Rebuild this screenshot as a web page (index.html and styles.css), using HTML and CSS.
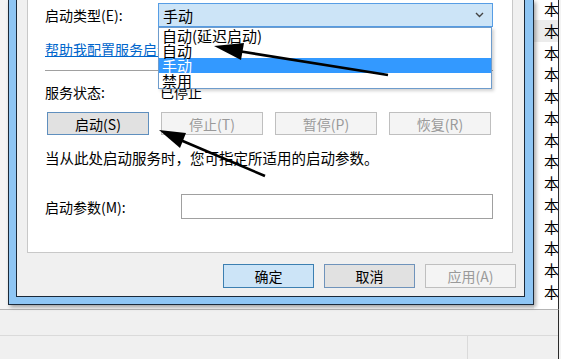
FILE: index.html
```html
<!DOCTYPE html>
<html lang="zh-CN">
<head>
<meta charset="utf-8">
<title>服务属性</title>
<link rel="stylesheet" href="styles.css">
</head>
<body>
<div class="screen">
  <div class="main">
    <div class="gutter"></div>
    <div class="dialog">
      <div class="dialog-inner">
        <div class="panel">
          <div class="row row-type">
            <span class="label">启动类型(E):</span>
            <div class="combo">
              <span>手动</span>
              <svg class="chev" width="9" height="6" viewBox="0 0 9 6"><path d="M1 1 L4.5 4.5 L8 1" fill="none" stroke="#444" stroke-width="1.4"/></svg>
            </div>
          </div>
          <div class="row-link"><a class="link">帮助我配置服务启动选项。</a></div>
          <div class="sep"></div>
          <div class="row row-status">
            <span class="label">服务状态:</span>
            <span class="value">已停止</span>
          </div>
          <div class="svc-buttons">
            <button class="btn btn-focus">启动(S)</button>
            <button class="btn btn-disabled">停止(T)</button>
            <button class="btn btn-disabled">暂停(P)</button>
            <button class="btn btn-disabled">恢复(R)</button>
          </div>
          <p class="desc">当从此处启动服务时，您可指定所适用的启动参数。</p>
          <div class="row row-param">
            <span class="label label-param">启动参数(M):</span>
            <div class="input"></div>
          </div>
        </div>
        <div class="dlg-buttons">
          <button class="btn btn-default">确定</button>
          <button class="btn btn-cancel">取消</button>
          <button class="btn btn-disabled">应用(A)</button>
        </div>
        <ul class="dropdown">
          <li>自动(延迟启动)</li>
          <li>自动</li>
          <li class="sel">手动</li>
          <li>禁用</li>
        </ul>
      </div>
    </div>
    <div class="list">
      <div class="li">本</div>
      <div class="li hl">本</div>
      <div class="li">本</div>
      <div class="li">本</div>
      <div class="li">本</div>
      <div class="li">本</div>
      <div class="li">本</div>
      <div class="li">本</div>
      <div class="li">本</div>
      <div class="li">本</div>
      <div class="li">本</div>
      <div class="li">本</div>
      <div class="li">本</div>
      <div class="li">本</div>
    </div>
  </div>
  <div class="status">
    <div class="status-top"></div>
    <div class="status-bottom">
      <div class="cell cell-main"></div>
      <div class="cell cell-side"></div>
    </div>
  </div>
  <svg class="arrows" width="561" height="359" viewBox="0 0 561 359">
    <line x1="388" y1="75" x2="238" y2="51" stroke="#000" stroke-width="2.6"/>
    <polygon points="214,46 244,43 241,60" fill="#000"/>
    <line x1="265" y1="176" x2="178" y2="139" stroke="#000" stroke-width="2.6"/>
    <polygon points="159,130 186,133 180,148" fill="#000"/>
  </svg>
</div>
</body>
</html>
```

FILE: styles.css
```css
* { box-sizing: border-box; }
html, body { margin: 0; padding: 0; }
body {
  width: 561px;
  height: 359px;
  overflow: hidden;
  background: #f3f3f3;
  font-family: "Noto Sans CJK SC", "Microsoft YaHei", sans-serif;
  font-size: 14px;
  color: #000;
}
.screen {
  position: relative;
  width: 561px;
  height: 359px;
  display: flex;
  flex-direction: column;
}
.main {
  display: flex;
  height: 309px;
  flex: none;
}
.gutter {
  width: 8px;
  flex: none;
  background: #f4f4f4;
}
.dialog {
  width: 526px;
  height: 305px;
  flex: none;
  background: #8fc6f4;
  border: 1px solid #1b2a3a;
  border-top: none;
  padding: 0 8px 7px 7px;
  box-shadow: 2px 2px 4px rgba(0,0,0,0.35);
  position: relative;
  z-index: 1;
}
.dialog-inner {
  position: relative;
  height: 100%;
  background: #f0f0f0;
  border: 1px solid #1b2a3a;
  border-top: none;
  padding: 0 11px 0 10px;
}
.panel {
  background: #fff;
  border: 1px solid #c8c8c8;
  border-top: none;
  height: 253px;
  padding: 3px 19px 0 17px;
}
.row {
  display: grid;
  grid-template-columns: 113px 1fr;
  align-items: center;
}
.label { white-space: nowrap; line-height: 18px; }
.row-type { height: 24px; }
.combo {
  height: 24px;
  background: #cce4f7;
  border: 1px solid #569de5;
  display: flex;
  align-items: center;
  justify-content: space-between;
  padding: 0 8px 0 4px;
  font-size: 15px;
}
.chev { display: block; }
.row-link { margin-top: 13px; height: 18px; line-height: 18px; }
.link {
  color: #0066cc;
  text-decoration: underline;
  white-space: nowrap;
}
.sep {
  margin-top: 12px;
  height: 1px;
  background: #a0a0a0;
}
.row-status { margin-top: 12px; height: 18px; }
.value { padding-left: 2px; line-height: 18px; }
.svc-buttons {
  margin: 11px 0 0 2px;
  display: grid;
  grid-template-columns: repeat(4, 102px);
  gap: 12px;
}
.btn {
  height: 23px;
  font-family: inherit;
  font-size: 14px;
  padding: 0;
  line-height: 20px;
  border: 1px solid #adadad;
  background: #e1e1e1;
  color: #000;
}
.btn-focus { border-color: #5f8fbe; background: #e1e1e1; }
.btn-disabled { border-color: #bfbfbf; background: #f4f4f4; color: #9a9a9a; }
.desc { margin: 14px 0 0; line-height: 18px; font-size: 14.5px; white-space: nowrap; }
.row-param {
  margin-top: 27px;
  grid-template-columns: 136px 1fr;
}
.input {
  height: 25px;
  border: 1px solid #a0a0a0;
  background: #fff;
}
.dlg-buttons {
  margin-top: 11px;
  display: flex;
  justify-content: flex-end;
  gap: 10px;
  margin-right: -3px;
}
.dlg-buttons .btn { width: 91px; height: 24px; }
.btn-default { background: #cce4f7; border-color: #3c7fb1; }
.btn-cancel { background: #e1e1e1; border-color: #6f93bb; }
.dropdown {
  position: absolute;
  left: 141px;
  top: 27px;
  width: 334px;
  margin: 0;
  padding: 0;
  list-style: none;
  background: #fff;
  border: 1px solid #6e9ccc;
  box-shadow: 2px 2px 3px rgba(0,0,0,0.18);
  font-size: 15px;
}
.dropdown li {
  height: 15px;
  line-height: 15px;
  padding-left: 3px;
  white-space: nowrap;
}
.dropdown li.sel { background: #3399ff; color: #fff; }
.list {
  flex: 1;
  background: #fff;
  border-right: 1px solid #2a2a2a;
  margin-right: 2px;
  padding: 0 0 0 10px;
  overflow: hidden;
  font-size: 15px;
}
.li {
  height: 21.75px;
  line-height: 21.75px;
  white-space: nowrap;
}
.li:first-child { margin-top: -2px; }
.li.hl { background: #ececec; margin-left: -10px; padding-left: 10px; }
.status {
  flex: 1;
  display: flex;
  flex-direction: column;
  border-top: 1px solid #b5b5b5;
  background: #f0f0f0;
  margin-right: 2px;
  border-right: 1px solid #2a2a2a;
}
.status-top { height: 26px; border-bottom: 1px solid #dadada; }
.status-bottom { flex: 1; display: flex; }
.cell-main { width: 468px; border-right: 1px solid #dadada; }
.cell-side { flex: 1; }
.arrows {
  position: absolute;
  left: 0;
  top: 0;
  z-index: 5;
  pointer-events: none;
}
```
